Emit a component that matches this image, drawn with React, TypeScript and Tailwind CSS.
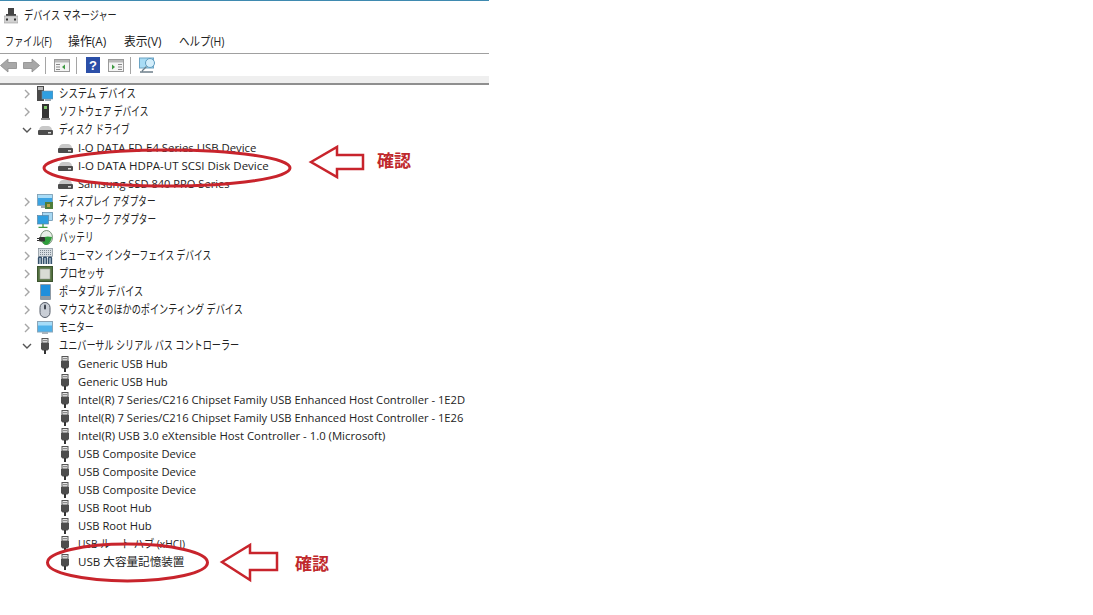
import type { ReactNode } from 'react';

const FONT = "font-['Open_Sans','Noto_Sans_CJK_JP',sans-serif]";

// kana in the reference is a narrow UI face, so squeeze it horizontally
const KANA = 'origin-left scale-x-[0.75] text-[12.5px]';
const KANA_73 = 'origin-left scale-x-[0.73] text-[12.5px]';
const KANA_70 = 'origin-left scale-x-[0.7] text-[12.5px]';
const KANA_69 = 'origin-left scale-x-[0.69] text-[12.5px]';
const MIXED = 'origin-left scale-x-[0.89] text-[11.5px]';
const KANJI = 'text-[11.6px]';
const LATIN = 'text-[11.2px]';
const LATIN_WIDE = 'text-[11.35px]';

type IconKind =
  | 'system' | 'software' | 'disk' | 'display' | 'network' | 'battery'
  | 'hid' | 'cpu' | 'portable' | 'mouse' | 'monitor' | 'usb';

function Chevron({ open }: { open?: boolean }) {
  return (
    <svg width="10" height="10" viewBox="0 0 10 10" fill="none" stroke={open ? '#555' : '#a6a6a6'} strokeWidth="1.4">
      {open ? <path d="M1 3l4 4 4-4" /> : <path d="M3 1l4 4-4 4" />}
    </svg>
  );
}

function DeviceIcon({ kind }: { kind: IconKind }) {
  let body: ReactNode = null;
  if (kind === 'system') {
    body = (
      <>
        <rect x="0" y="0" width="7" height="15" fill="#4a4a4a" />
        <rect x="1" y="1" width="5" height="3" fill="#bbb" />
        <rect x="5" y="5" width="11" height="8" fill="#2f9fe0" stroke="#6f8ea3" strokeWidth="0.6" />
        <rect x="8" y="13" width="6" height="2" fill="#9aa7b0" />
      </>
    );
  } else if (kind === 'software') {
    body = (
      <>
        <rect x="5" y="0" width="7" height="15" fill="#333" />
        <rect x="7" y="2" width="3" height="3" fill="#7fc66b" />
        <rect x="4" y="14" width="9" height="2" fill="#888" />
      </>
    );
  } else if (kind === 'disk') {
    body = (
      <>
        <path d="M2 8C2.500 5 4 4 6 4h5c2 0 3.500 1 4 4z" fill="#c8c8c8" />
        <rect x="1" y="8" width="15" height="5" rx="1" fill="#4c4c4c" />
        <rect x="11" y="10" width="3" height="1.500" fill="#d8d8d8" />
      </>
    );
  } else if (kind === 'display') {
    body = (
      <>
        <rect x="0.500" y="0.500" width="15" height="11" fill="#3ba3e2" stroke="#7d97a8" strokeWidth="0.7" />
        <rect x="1" y="1" width="14" height="3" fill="#a9dcf7" />
        <rect x="8" y="8" width="8" height="7" fill="#4f7d3a" />
        <rect x="10" y="10" width="3" height="3" fill="#b8a24a" />
        <rect x="4" y="12" width="4" height="2" fill="#9aa7b0" />
      </>
    );
  } else if (kind === 'network') {
    body = (
      <>
        <rect x="5.500" y="0.500" width="10" height="8" fill="#a6d8f3" stroke="#5a86a5" strokeWidth="0.7" />
        <rect x="0.500" y="3.500" width="11" height="8.500" fill="#2f9fe0" stroke="#5a86a5" strokeWidth="0.7" />
        <path d="M6 12v3M1.500 15.500h9" stroke="#3f9a42" strokeWidth="1.300" fill="none" />
      </>
    );
  } else if (kind === 'battery') {
    body = (
      <>
        <ellipse cx="9.500" cy="7.500" rx="6" ry="7" fill="#e8efe8" stroke="#5c7a5c" strokeWidth="0.8" />
        <path d="M5 9c2-3 6-3 10-2-1 4-3 8-6 8-2 0-4-3-4-6z" fill="#2f9d3c" />
        <rect x="2" y="7" width="6" height="4.500" rx="1" fill="#333" />
        <path d="M0 8.500h2M0 10.500h2" stroke="#333" />
      </>
    );
  } else if (kind === 'hid') {
    body = (
      <>
        <rect x="1.500" y="0.500" width="14" height="8" fill="#d7dde2" stroke="#7f8a93" strokeWidth="0.7" />
        <path d="M3 2.500h11M3 4.500h11M3 6.500h11" stroke="#7f8a93" strokeDasharray="1 1" />
        <path d="M1.500 16V10c0-1 3-1 3 0v6M6.500 16V10c0-1 3-1 3 0v6M11.500 16V10c0-1 3-1 3 0v6" stroke="#35506b" strokeWidth="1.300" fill="#9fb3c4" />
      </>
    );
  } else if (kind === 'cpu') {
    body = (
      <>
        <rect x="0.500" y="0.500" width="15" height="15" fill="#53713f" stroke="#3d5530" />
        <rect x="3" y="3" width="10" height="10" fill="#d9dbd5" stroke="#9ba097" strokeWidth="0.6" />
      </>
    );
  } else if (kind === 'portable') {
    body = (
      <>
        <rect x="3" y="0" width="11" height="16" rx="1" fill="#8d9aa5" />
        <rect x="4" y="1" width="9" height="11" fill="#1f8fdc" />
      </>
    );
  } else if (kind === 'mouse') {
    body = (
      <>
        <rect x="3" y="0.500" width="10" height="15" rx="5" fill="#c9ced6" stroke="#555c68" />
        <rect x="7" y="2.500" width="2" height="5" rx="1" fill="#3f4650" />
      </>
    );
  } else if (kind === 'monitor') {
    body = (
      <>
        <rect x="0.500" y="1.500" width="15" height="10.500" fill="#4fb2ea" stroke="#8aa5b8" />
        <rect x="1" y="2" width="14" height="3.500" fill="#a5dcf8" />
        <rect x="5" y="12" width="6" height="2" fill="#a9b4bc" />
      </>
    );
  } else {
    body = (
      <>
        <rect x="5" y="0.500" width="6" height="4.500" fill="#e6e6e6" stroke="#555" />
        <rect x="6.500" y="2" width="1" height="1.200" fill="#333" />
        <rect x="8.500" y="2" width="1" height="1.200" fill="#333" />
        <path d="M4 5h8v6l-1.500 1.500h-5L4 11z" fill="#4d4d4d" />
        <rect x="7" y="12" width="2" height="4" fill="#333" />
      </>
    );
  }
  return (
    <svg width="16" height="16" viewBox="0 0 16 16" className="shrink-0">
      {body}
    </svg>
  );
}

function Arrow({ flip }: { flip?: boolean }) {
  return (
    <svg width="17" height="15" viewBox="0 0 17 15" className={`shrink-0 ${flip ? '-scale-x-100' : ''}`}>
      <path d="M.5 7.500 8 1v3.500h8.500v6H8V14z" fill="#a8a8a8" stroke="#8b8b8b" strokeWidth="0.8" />
    </svg>
  );
}

function ToolSep() {
  return <div className="h-[17px] w-px bg-[#a5a5a5]" />;
}

function PaneIcon({ flip }: { flip?: boolean }) {
  return (
    <svg width="16" height="13" viewBox="0 0 16 13">
      <rect x="0.500" y="0.500" width="15" height="12" fill="#f4f4f4" stroke="#9a9a9a" />
      <rect x="1" y="1" width="14" height="2.500" fill="#b9b9b9" />
      <path d={flip ? 'M4 5.500v5l3-2.500z' : 'M11 5.500v5L8 8z'} fill="#3f9a42" />
      <path d={flip ? 'M10 5.500h4M10 8h4M10 10.500h4' : 'M2 5.500h4M2 8h4M2 10.500h4'} stroke="#8a8a8a" />
    </svg>
  );
}

function Toolbar() {
  return (
    <div className="flex h-[22px] items-center">
      <Arrow />
      <div className="ml-[6px]"><Arrow flip /></div>
      <div className="ml-[5px]"><ToolSep /></div>
      <div className="ml-[8px]"><PaneIcon /></div>
      <div className="ml-[6px]"><ToolSep /></div>
      <svg width="14" height="16" viewBox="0 0 14 16" className="ml-[9px]">
        <rect width="14" height="16" fill="#2b4fa8" />
        <text x="7" y="13" textAnchor="middle" fontSize="13" fontWeight="700" fill="#fff" fontFamily="Liberation Sans, sans-serif">?</text>
      </svg>
      <div className="ml-[8px]"><PaneIcon flip /></div>
      <div className="ml-[6px]"><ToolSep /></div>
      <svg width="18" height="17" viewBox="0 0 18 17" className="ml-[8px]">
        <rect x="0.500" y="1" width="14" height="10" fill="#a8dcf5" stroke="#6ca4c4" />
        <circle cx="11" cy="6" r="4.500" fill="#d3eefb" stroke="#5f9cbf" />
        <path d="M7.500 9.500 3 14M1 15h13" stroke="#6d7f8a" strokeWidth="1.300" />
      </svg>
    </div>
  );
}

function Row({ label, icon, indent, expander, text = KANA }: { label: string; icon: IconKind; indent?: boolean; expander?: 'open' | 'closed'; text?: string }) {
  return (
    <div className={`flex h-[18px] items-center ${indent ? 'pl-[57px]' : 'pl-[22px]'}`}>
      {!indent && (
        <div className="flex w-[15px] shrink-0 justify-start">
          <Chevron open={expander === 'open'} />
        </div>
      )}
      <DeviceIcon kind={icon} />
      <span className={`whitespace-nowrap leading-[18px] text-[#222] ${text} ${indent ? 'ml-[5px]' : 'ml-[6px]'}`}>
        {label}
      </span>
    </div>
  );
}

const usbChildren: { label: string; text: string }[] = [
  { label: 'Generic USB Hub', text: LATIN },
  { label: 'Generic USB Hub', text: LATIN },
  { label: 'Intel(R) 7 Series/C216 Chipset Family USB Enhanced Host Controller - 1E2D', text: LATIN },
  { label: 'Intel(R) 7 Series/C216 Chipset Family USB Enhanced Host Controller - 1E26', text: LATIN },
  { label: 'Intel(R) USB 3.0 eXtensible Host Controller - 1.0 (Microsoft)', text: LATIN_WIDE },
  { label: 'USB Composite Device', text: LATIN },
  { label: 'USB Composite Device', text: LATIN },
  { label: 'USB Composite Device', text: LATIN },
  { label: 'USB Root Hub', text: LATIN },
  { label: 'USB Root Hub', text: LATIN },
  { label: 'USB ルート ハブ (xHCI)', text: MIXED },
  { label: 'USB 大容量記憶装置', text: KANJI },
];

function Callout({ ellipse, arrow, labelClass }: { ellipse: [number, number, number, number]; arrow: string; labelClass: string }) {
  const [cx, cy, rx, ry] = ellipse;
  return (
    <>
      <svg width="1093" height="615" viewBox="0 0 1093 615" fill="none" stroke="#c8242c" strokeWidth="3" className="pointer-events-none absolute left-0 top-0">
        <ellipse cx={cx} cy={cy} rx={rx} ry={ry} />
        <path d={arrow} strokeWidth="2.500" />
      </svg>
      <span className={`absolute whitespace-nowrap text-[17px] font-bold leading-[20px] text-[#c0282c] ${labelClass}`}>
        確認
      </span>
    </>
  );
}

export default function App() {
  return (
    <div className={`relative h-[615px] w-[1093px] overflow-hidden bg-white ${FONT}`}>
      <div className="w-[489px]">
        <div className="h-px bg-[#3f8ab0]" />
        <div className="flex h-[30px] items-center pl-[4px]">
          <svg width="14" height="16" viewBox="0 0 14 16">
            <rect x="4" y="0" width="6" height="6" fill="#444" />
            <rect x="2" y="6" width="10" height="2" fill="#444" />
            <rect x="0" y="8" width="14" height="7" fill="#d2d2d2" stroke="#999" strokeWidth="0.6" />
            <rect x="2" y="10.500" width="2" height="2" fill="#333" />
            <rect x="10" y="10.500" width="2" height="2" fill="#333" />
          </svg>
          <span className="ml-[6px] origin-left scale-x-[0.73] whitespace-nowrap text-[12.5px] text-[#222]">デバイス マネージャー</span>
        </div>
        <div className="flex h-[23px] items-center border-b border-[#a0a0a0] pl-[5px] text-[12.5px] text-[#222]">
          <span className="w-[63px] origin-left scale-x-[0.73] whitespace-nowrap">ファイル(F)</span>
          <span className="w-[56px] origin-left scale-x-[0.95] whitespace-nowrap">操作(A)</span>
          <span className="w-[55px] origin-left scale-x-[0.94] whitespace-nowrap">表示(V)</span>
          <span className="origin-left scale-x-[0.84] whitespace-nowrap">ヘルプ(H)</span>
        </div>
        <Toolbar />
        <div className="h-[9px] border-b-2 border-b-[#8f8f8f] bg-[#efefef]" />
        <div>
          <Row icon="system" label="システム デバイス" expander="closed" />
          <Row icon="software" label="ソフトウェア デバイス" expander="closed" text={KANA_70} />
          <Row icon="disk" label="ディスク ドライブ" expander="open" text={KANA_69} />
          <Row indent icon="disk" label="I-O DATA FD-E4 Series USB Device" text={LATIN_WIDE} />
          <Row indent icon="disk" label="I-O DATA HDPA-UT SCSI Disk Device" text="text-[11.5px]" />
          <Row indent icon="disk" label="Samsung SSD 840 PRO Series" text="text-[11.1px]" />
          <Row icon="display" label="ディスプレイ アダプター" expander="closed" text={KANA_69} />
          <Row icon="network" label="ネットワーク アダプター" expander="closed" text={KANA_69} />
          <Row icon="battery" label="バッテリ" expander="closed" text={KANA_69} />
          <Row icon="hid" label="ヒューマン インターフェイス デバイス" expander="closed" text={KANA_70} />
          <Row icon="cpu" label="プロセッサ" expander="closed" text={KANA_73} />
          <Row icon="portable" label="ポータブル デバイス" expander="closed" text={KANA_73} />
          <Row icon="mouse" label="マウスとそのほかのポインティング デバイス" expander="closed" text={KANA_73} />
          <Row icon="monitor" label="モニター" expander="closed" text={KANA_69} />
          <Row icon="usb" label="ユニバーサル シリアル バス コントローラー" expander="open" text={KANA_73} />
          {usbChildren.map((c, i) => (
            <Row key={i} indent icon="usb" label={c.label} text={c.text} />
          ))}
        </div>
      </div>
      <Callout ellipse={[167, 168, 123, 18]} arrow="M311 162 337 147V155H363V169H337V177Z" labelClass="left-[377px] top-[151px]" />
      <Callout ellipse={[127.5, 562.5, 80, 18.5]} arrow="M222 562 250 545V553H277V570H250V580Z" labelClass="left-[295px] top-[554px]" />
    </div>
  );
}
